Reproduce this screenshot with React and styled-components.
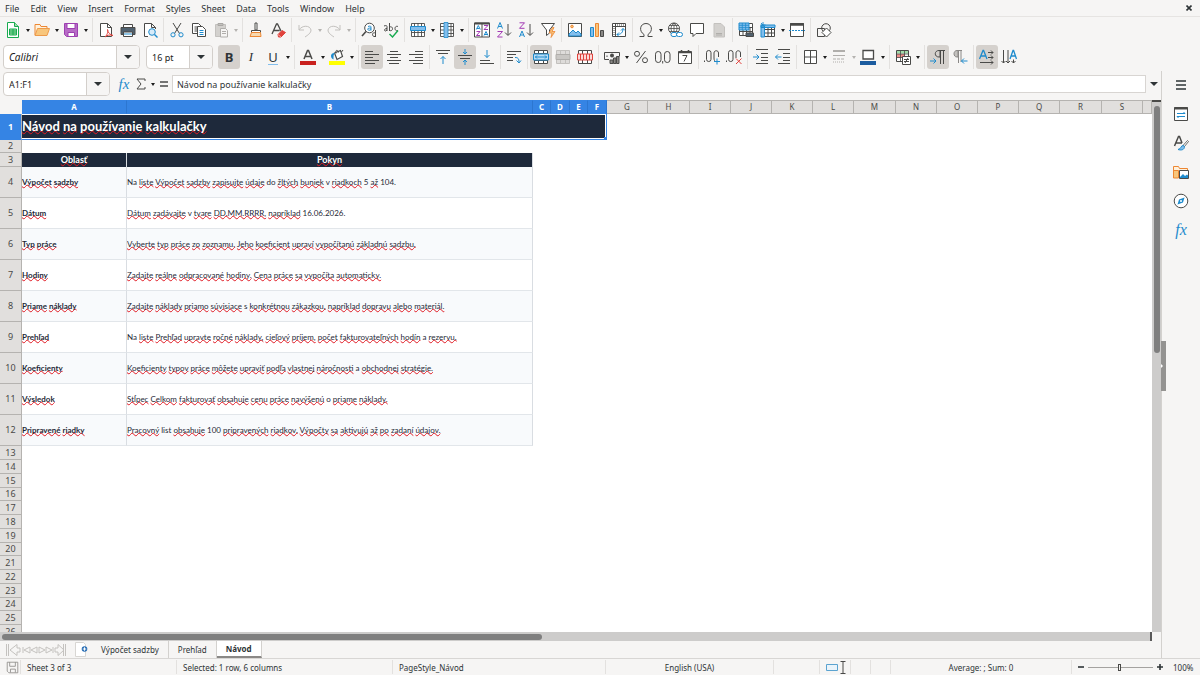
import React from 'react';
import styled, { createGlobalStyle } from 'styled-components';

const menus = ['File', 'Edit', 'View', 'Insert', 'Format', 'Styles', 'Sheet', 'Data', 'Tools', 'Window', 'Help'];

const rows = [
  ['Výpočet sadzby', 'Na liste Výpočet sadzby zapisujte údaje do žltých buniek v riadkoch 5 až 104.'],
  ['Dátum', 'Dátum zadávajte v tvare DD.MM.RRRR, napríklad 16.06.2026.'],
  ['Typ práce', 'Vyberte typ práce zo zoznamu. Jeho koeficient upraví vypočítanú základnú sadzbu.'],
  ['Hodiny', 'Zadajte reálne odpracované hodiny. Cena práce sa vypočíta automaticky.'],
  ['Priame náklady', 'Zadajte náklady priamo súvisiace s konkrétnou zákazkou, napríklad dopravu alebo materiál.'],
  ['Prehľad', 'Na liste Prehľad upravte ročné náklady, cieľový príjem, počet fakturovateľných hodín a rezervu.'],
  ['Koeficienty', 'Koeficienty typov práce môžete upraviť podľa vlastnej náročnosti a obchodnej stratégie.'],
  ['Výsledok', 'Stĺpec Celkom fakturovať obsahuje cenu práce navýšenú o priame náklady.'],
  ['Pripravené riadky', 'Pracovný list obsahuje 100 pripravených riadkov. Výpočty sa aktivujú až po zadaní údajov.'],
];

const emptyRows = Array.from({ length: 14 }, (_, i) => i + 13);
const farColumns = 'GHIJKLMNOPQRS'.split('');
const knownWord = /^(Na|do|v|s|a|o|list|\d.*)$/;

// drawings are 16x16, strokes take the colours below
const ink = '#4a4a48';
const blue = '#1e8bcd';
const sky = '#83beec';
const orange = '#ed8733';
const pale = '#c3c1be';

const lines = (list, color = ink) =>
  list.map(([x1, x2, y]) => <path key={y} d={`M${x1} ${y}H${x2}`} stroke={color} />);

const icons = {
  newDoc: (
    <>
      <path d="M2.500 .5h7l4 4v11h-11z" fill="#fff" stroke="#18ab50" />
      <path d="M9.500 .5v4h4" fill="#a1ddaa" stroke="#18ab50" />
      <path d="M4.500 7h7v6h-7zM4.500 9h7M4.500 11h7M8 7v6" fill="#a1ddaa" stroke="#18ab50" />
    </>
  ),
  open: (
    <>
      <path d="M1 13V2.500h5l1 2h6V7" fill="#fff1dc" stroke={orange} />
      <path d="M1 13.500L3.500 6.500h12L13 13.500z" fill="#f8c67c" stroke="#ed9a4a" />
    </>
  ),
  save: (
    <>
      <path d="M1.500 1.500h13v13h-11l-2-2z" fill="#b76bc6" stroke="#9d3fb0" />
      <path d="M4 1.500h8v5H4z" fill="#fff" stroke="#9d3fb0" />
      <path d="M5 10.500h6.500v4H5z" fill="#fff" stroke="#9d3fb0" />
    </>
  ),
  saved: <path d="M1.500 1.500h13v13h-11l-2-2zM4.500 1.500v5h7v-5M5.500 14v-4h6v4" stroke="#8b8986" />,
  pdf: (
    <>
      <path d="M2.500 1.500h7l4 4v9h-11z" fill="#fff" stroke={ink} />
      <path d="M9.500 1.500v4h4" stroke={ink} />
      <path d="M7 15c3-3 3-6 2.500-7.500 0 3 3 5.500 5.500 6-3-1-6-.5-8 1.500z" stroke="#e0433d" />
    </>
  ),
  print: (
    <>
      <path d="M3.500 5V2.500h9V5" fill="#fff" stroke={ink} />
      <path d="M1 5.500h14v7H1z" fill="#50616f" stroke={ink} />
      <path d="M3.500 10h9v4.500h-9z" fill="#fff" stroke={ink} />
      <path d="M4 12h8" stroke={blue} />
    </>
  ),
  preview: (
    <>
      <path d="M6 14.500H2.500v-13h7l4 4V7M9.500 1.500v4h4" fill="#fff" stroke={ink} />
      <circle cx="10" cy="10" r="3.300" fill="#d7ebf9" stroke={blue} />
      <path d="M12.500 12.500l3 3" stroke={blue} strokeWidth="1.400" />
    </>
  ),
  cut: (
    <>
      <path d="M4 1l6.500 10.500M12 1L5.500 11.500" stroke={ink} />
      <circle cx="4" cy="12.800" r="2.100" stroke={blue} />
      <circle cx="12" cy="12.800" r="2.100" stroke={blue} />
    </>
  ),
  copy: (
    <>
      <path d="M1.500 1.500h6l3 3v7h-9zM3.500 5h4M3.500 7h4M3.500 9h4" fill="#fff" stroke={ink} />
      <path d="M6.500 4.500h5l3 3v7h-8z" fill="#fff" stroke={ink} />
      <path d="M8.500 8.500h4M8.500 10.500h4M8.500 12.500h4" stroke={blue} />
    </>
  ),
  paste: (
    <>
      <path d="M2.500 2.500h10v12h-10z" fill="#d3d1ce" stroke={pale} />
      <path d="M5 1.500h5v2H5z" stroke="#aaa8a5" />
      <path d="M7.500 6.500h5l2 2v6.500h-7zM9 9.500h4M9 11.500h4" fill="#f6f5f4" stroke="#b0aeab" />
    </>
  ),
  brush: (
    <>
      <path d="M7 1h2v7H7z" fill="#fff" stroke={ink} />
      <path d="M3.500 8.500h9v2h-9z" fill="#fff" stroke={ink} />
      <path d="M3.500 10.500h9l.5 4H2z" fill="#f8d9b0" stroke={orange} />
    </>
  ),
  clear: (
    <>
      <path d="M2 12L6.500 2h1L11 9M3.700 8.500h6" stroke={ink} strokeWidth="1.300" />
      <path d="M8 12.500l4-4 3.500 2-4.500 4.500H8.500z" fill="#e0433d" stroke="#e0433d" />
      <path d="M8 12.500l3 2.500" stroke="#f5a29e" />
    </>
  ),
  undo: <path d="M2 3v5h5M2 8c3-5 11-5 12 0 0 3-3 5-6 7" stroke={pale} />,
  redo: <path d="M14 3v5H9M14 8C11 3 3 3 2 8c0 3 3 5 6 7" stroke={pale} />,
  find: (
    <>
      <circle cx="8.500" cy="6" r="4.800" fill="#fff" stroke={ink} />
      <path d="M5 9.500L1 14" stroke={ink} strokeWidth="1.600" />
      <path d="M7 4.500c3-1 3 0 3 1v3M10 6c-3 0-3.500.5-3.200 1.500.4 1 2 1 3.200 0" stroke={blue} />
      <path d="M14.500 8v7M14.500 11c-4-1.500-4 4.500 0 3.500" stroke={ink} />
    </>
  ),
  spell: (
    <>
      <path d="M1 4c3-1 3 0 3 1v4M4 6.500C1 6.500 1 9 2.500 9L4 8M6.500 1v8M6.500 5c4-1.500 4 5 0 3.500M15 4.500c-4-1.500-4 5.500 0 4" stroke={ink} />
      <path d="M6.500 12l3 3L15 8.500" stroke="#18ab50" strokeWidth="1.400" />
    </>
  ),
  rowIns: (
    <>
      <path d="M1.500 1.500h13v13h-13zM1.500 10.500h13M4.500 1v14M8 1v14M11.500 1v14" fill="#fff" stroke={ink} strokeWidth=".9" />
      <path d="M.5 4.500h15v4H.5z" fill={sky} stroke={blue} />
    </>
  ),
  colIns: (
    <>
      <path d="M1.500 1.500h13v13h-13zM1 4.500h14M1 8h14M1 11.500h14M12 1v14" fill="#fff" stroke={ink} strokeWidth=".9" />
      <path d="M5 .5h4v15H5z" fill={sky} stroke={blue} strokeWidth=".8" />
    </>
  ),
  sort: (
    <>
      <path d="M.5 1h15v14H.5zM8 1v14" fill="#fff" stroke={ink} />
      <path d="M.5 1.500h15" stroke={ink} strokeWidth="2" />
      <path d="M2.300 7.500l2-4 2 4M3 6.500h2.500M10 13.500l2-4 2 4M10.700 12.500h2.500" stroke={blue} />
      <path d="M2.500 9.500H6l-3.500 4H6M10 3.500h4l-4 4h4" stroke="#a33ab5" />
    </>
  ),
  sortAsc: (
    <>
      <path d="M1.500 6.500l2.500-6 2.500 6M2.300 4.500h3.400" stroke={blue} />
      <path d="M1.500 9.500h5l-5 5.500h5" stroke="#a33ab5" />
      <path d="M12 2v11M9 10.500l3 3 3-3" stroke={ink} />
    </>
  ),
  sortDesc: (
    <>
      <path d="M1.500 .8h5l-5 5.500h5" stroke="#a33ab5" />
      <path d="M1.500 15L4 9l2.500 6M2.300 13h3.400" stroke={blue} />
      <path d="M12 2v11M9 10.500l3 3 3-3" stroke={ink} />
    </>
  ),
  filter: (
    <>
      <path d="M1.500 1.500h13L9.500 8v3l-3 2.500V8z" fill="#fff" stroke={ink} />
      <path d="M12.500 5.500L9 11h3l-1 4.500 4-6h-3l2-4z" fill="#f8c67c" stroke={orange} strokeWidth=".8" />
    </>
  ),
  image: (
    <>
      <path d="M1.500 1.500h13v13h-13z" fill="#fff" stroke={ink} />
      <path d="M2 12l4-4 3 3 2-2 3 3v2H2z" fill={sky} stroke={blue} />
      <circle cx="5" cy="4.500" r="1.300" fill="#f8c67c" stroke={orange} />
    </>
  ),
  chart: (
    <>
      <path d="M1.500 5.500h3v9h-3z" fill={sky} stroke={blue} />
      <path d="M6.500 1.500h3v13h-3z" fill="#f8c67c" stroke={orange} />
      <path d="M11.500 8.500h3v6h-3z" fill="#8a8886" stroke={ink} />
    </>
  ),
  pivot: (
    <>
      <path d="M1.500 1.500h13v13h-13zM1.500 4.500h13M4.500 1.500v13" fill="#fff" stroke={ink} />
      <path d="M6 12.500c4 0 6-2 6-6M8 10.500l-2 2 2 2M10 8.500l2-2 2 2" stroke={blue} />
      <path d="M3 6v8M6 3h8" stroke={ink} strokeDasharray="1 1" />
    </>
  ),
  omega: <path d="M1.500 14.500H6v-2C.5 9 2 1.500 8 1.500S15.500 9 10 12.500v2h4.500" stroke={ink} />,
  link: (
    <>
      <circle cx="7" cy="6.500" r="5.500" fill="#fff" stroke={ink} />
      <path d="M1.500 6.500h11M7 1v11M2.500 3.500h9M2.500 9.500h9M7 1C3 4 3 9 7 12M7 1c4 3 4 8 0 11" stroke={ink} strokeWidth=".8" />
      <rect x="4" y="10.500" width="6" height="4" rx="2" fill="#fff" stroke={blue} />
      <rect x="9.500" y="10.500" width="6" height="4" rx="2" fill="#fff" stroke={blue} />
    </>
  ),
  comment: <path d="M1.500 1.500h13v10H7l-3 3v-3H1.500z" fill="#fff" stroke={ink} />,
  header: (
    <>
      <path d="M3 1.500h7l3.500 3.500v10H3z" fill="#d3d1ce" stroke={pale} />
      <path d="M5 11.500h6M5 13h6" stroke="#b0aeab" />
    </>
  ),
  printArea: (
    <>
      <path d="M1.500 1.500h13v12h-13zM1.500 5.500h13M1.500 9.500h13M5 5v8M8.500 5v8M12 5v8" fill="#fff" stroke={ink} />
      <path d="M1 1h10v7H1z" fill={sky} stroke={blue} />
      <path d="M1 3.300h10M1 5.600h10M4.300 1v7M7.600 1v7" stroke={blue} strokeWidth=".8" />
      <path d="M8 11h7.500v3.500H8z" fill="#50616f" stroke={ink} />
    </>
  ),
  freeze: (
    <>
      <path d="M1.500 3.500h13v11h-13zM1.500 7.500h13M1.500 11h13M8 4v10M11.500 4v10" fill="#fff" stroke={ink} />
      <path d="M1 4h3.500v11H1zM1 3h14v2.500H1z" fill={sky} stroke={blue} />
      <path d="M3 0v6M.5 3h5M1 1l4 4" stroke={blue} strokeWidth=".9" />
    </>
  ),
  splitWin: (
    <>
      <path d="M1.500 1.500h13v13h-13z" fill="#fff" stroke={ink} />
      <path d="M1 2.500h14" stroke={ink} strokeWidth="2.500" />
      <path d="M0 8.500h16" stroke={blue} strokeDasharray="2 1" />
    </>
  ),
  shapes: (
    <>
      <path d="M1.500 6.500h7v8h-7z" stroke={ink} />
      <circle cx="10" cy="6" r="4.300" stroke={ink} />
      <path d="M10.500 6L15 10.500 10.500 15 6 10.500z" fill="#fff" stroke={ink} />
    </>
  ),
  fontColor: (
    <>
      <path d="M4 10L7.500 1.500h1L12 10M5.200 7.500h5.600" stroke={ink} strokeWidth="1.500" />
      <path d="M0 12h16v4H0z" fill="#c9211e" />
    </>
  ),
  highlight: (
    <>
      <path d="M0 12h16v4H0z" fill="#ffff00" />
      <path d="M5.500 4l6-2.500 2 6-5.500 3z" fill="#fff" stroke={ink} strokeWidth="1.200" />
      <path d="M7 4.500c-1-4 2-4 2.500-1M12.500 3l1.500-2" stroke={ink} />
      <path d="M4.500 10.500C1 9 1 3.500 6 4c-1.500 1-1.500 3-1.500 6.500z" fill={blue} />
    </>
  ),
  left: lines([[1, 9, 2.5], [1, 15, 5.5], [1, 9, 8.5], [1, 15, 11.5], [1, 11, 14.5]]),
  center: lines([[4, 12, 2.5], [1, 15, 5.5], [4, 12, 8.5], [1, 15, 11.5], [3, 13, 14.5]]),
  right: lines([[7, 15, 2.5], [1, 15, 5.5], [7, 15, 8.5], [1, 15, 11.5], [5, 15, 14.5]]),
  top: (
    <>
      {lines([[1, 15, 1.5], [3, 13, 4.5]])}
      <path d="M8 15V7.500M5.500 10L8 7.500l2.500 2.500" stroke={blue} />
    </>
  ),
  middle: (
    <>
      {lines([[1, 15, 6.5], [3, 13, 9.5]])}
      <path d="M8 0v5M6 3l2 2 2-2M8 16v-5M6 13l2-2 2 2" stroke={blue} />
    </>
  ),
  bottom: (
    <>
      {lines([[1, 11, 11.5], [1, 15, 14.5]])}
      <path d="M8 1v7.500M5.500 6L8 8.500 10.500 6" stroke={blue} />
    </>
  ),
  wrap: (
    <>
      {lines([[1, 15, 2.5], [1, 10, 5.5], [1, 7, 8.5], [1, 7, 11.5]])}
      <path d="M9 8.500c3 0 4 1 4 5M10.500 11.500l2.500 2.500 2-2.500" stroke={blue} />
    </>
  ),
  merge: (
    <>
      <path d="M1.500 1.500h13v13h-13zM5.500 1v14M10.500 1v14M1.500 4.500h13M1.500 11.500h13" fill="#fff" stroke={ink} />
      <path d="M.5 5h15v6H.5z" fill="#b9dcf5" stroke={blue} />
      <path d="M2 8h12M4 6.500L2.500 8 4 9.500M12 6.500L13.500 8 12 9.500" stroke={blue} />
    </>
  ),
  mergeOff: (
    <>
      <path d="M1.500 1.500h13v13h-13zM5.500 1v14M10.500 1v14" fill="#dedcda" stroke={pale} />
      <path d="M1 5.500h14v5H1z" fill="#c9c7c4" stroke="#b0aeab" />
    </>
  ),
  unmerge: (
    <>
      <path d="M1.500 1.500h13v13h-13zM5.500 1v14M10.500 1v14" fill="#fff" stroke={ink} />
      <path d="M.5 5h15v6H.5zM3.500 5v6M6.500 5v6M9.500 5v6M12.500 5v6" fill="#fbdad9" stroke="#e0433d" />
    </>
  ),
  currency: (
    <>
      <path d="M5 10.500H.5v-7h15v4M3 6.500v1.500" stroke={ink} />
      <circle cx="8" cy="6.500" r="2" fill={ink} />
      <path d="M6 11h3v3.500H6zM9.500 9H12v5.500H9.500zM12.500 7.500h2.500v7h-2.500z" fill="#8a8886" stroke={ink} />
    </>
  ),
  percent: (
    <>
      <circle cx="4" cy="4.800" r="2.500" stroke={ink} />
      <circle cx="12" cy="11.200" r="2.500" stroke={ink} />
      <path d="M12.500 2l-9 12" stroke={ink} />
    </>
  ),
  number: (
    <>
      <rect x=".5" y="2.500" width="5.500" height="11" rx="2.700" stroke={ink} />
      <rect x="9.500" y="2.500" width="5.500" height="11" rx="2.700" stroke={ink} />
      <path d="M7.700 12v2.500" stroke={ink} />
    </>
  ),
  date: (
    <>
      <path d="M1.500 2.500h13v12h-13z" fill="#fff" stroke={ink} />
      <path d="M1.500 3.500h13M4.500 1v2M11.500 1v2" stroke={ink} strokeWidth="1.600" />
      <path d="M5.500 6.500h4.500l-3 6" stroke={ink} />
    </>
  ),
  addDec: (
    <>
      <rect x="2.500" y="1.500" width="4.500" height="11" rx="2.200" stroke={ink} />
      <path d="M.5 11.500v1.500M14.500 8V4c0-3-4.500-3-4.500 0v5c0 2 .5 2.500 1 3" stroke={ink} />
      <path d="M13 9.500v6M10 12.500h6" stroke={blue} />
    </>
  ),
  delDec: (
    <>
      <rect x="2.500" y="1.500" width="4.500" height="11" rx="2.200" stroke={ink} />
      <path d="M.5 11.500v1.500M14.500 8V4c0-3-4.500-3-4.500 0v5" stroke={ink} />
      <path d="M10 9.500l5.500 5.500M15.500 9.500L10 15" stroke="#e0433d" />
    </>
  ),
  indent: (
    <>
      {lines([[3, 15, 0.5], [8, 15, 4.5], [8, 15, 8.5], [8, 15, 11.5], [3, 15, 14.5]])}
      <path d="M0 8h6M3.500 5.500L6 8l-2.500 2.500" stroke={blue} />
    </>
  ),
  outdent: (
    <>
      {lines([[3, 15, 0.5], [8, 15, 4.5], [8, 15, 8.5], [8, 15, 11.5], [3, 15, 14.5]])}
      <path d="M6.500 8h-6M3 5.500L.5 8 3 10.500" stroke={blue} />
    </>
  ),
  borders: (
    <>
      <path d="M2.500 1.500h12v13h-12z" fill="#fff" stroke={ink} />
      <path d="M8.500 2v12M3 8h11" stroke={ink} />
    </>
  ),
  borderStyle: (
    <>
      <path d="M2 2h12" stroke="#b0aeab" strokeWidth="2" />
      <path d="M2 6.500h12" stroke="#b0aeab" />
      <path d="M2 10h12" stroke="#b0aeab" strokeDasharray="3 1" />
      <path d="M2 13h12" stroke="#b0aeab" strokeDasharray="1 1" />
    </>
  ),
  lineColor: (
    <>
      <path d="M3 1.500h10.500v8.500H3z" fill="#fff" stroke={ink} strokeWidth="1.300" />
      <path d="M0 12h16v4H0z" fill="#1c5c9f" />
    </>
  ),
  cond: (
    <>
      <path d="M1.500 1.500h12v11h-12z" fill="#fff" stroke={ink} />
      <path d="M2 2h11v2.500H2z" fill="#a1ddaa" />
      <path d="M2 5h8v3.500H2z" fill="#ef8d89" />
      <path d="M1.500 5h12M1.500 8.500h12M5.500 1v11M9.500 1v11" stroke={ink} strokeWidth=".8" />
      <path d="M7.500 7.500h8v8h-8z" fill="#fff" stroke={ink} />
      <path d="M9 10.500h5M9 12.500h5M13 9l-3 5" stroke={ink} />
    </>
  ),
  ltr: (
    <>
      <path d="M13.500 15V1.500H9C4 1.500 4 8 9 8h1V1.500M10.500 1.500V15M9 1.500h6" stroke={ink} />
      <path d="M0 12h6M3.500 9.500L6 12l-2.500 2.500" stroke={blue} />
    </>
  ),
  rtl: (
    <>
      <path d="M6.500 1.500H5C1 1.500 1 8 5 8h1.500z" fill={pale} />
      <path d="M9 13V1.500H5C1 1.500 1 8 5 8h1V1.500M6.500 1.500V14M5 1.500h5" stroke="#8a8886" />
      <path d="M15.500 12h-6M12 9.500L9.500 12l2.500 2.500" stroke={blue} />
    </>
  ),
  horText: (
    <>
      <path d="M.5 10L4 1.500h.6L8 10M1.800 7h5" stroke={blue} strokeWidth="1.300" />
      <path d="M9 3.500h5M12 1.500l2 2-2 2M9 8.500h5M12 6.500l2 2-2 2M1 13.500h13M12 11.500l2 2-2 2" stroke={ink} />
    </>
  ),
  verText: (
    <>
      <path d="M9 10l3-8.500h.6L15.500 10M10 7h4.500" stroke={blue} strokeWidth="1.300" />
      <path d="M2.500 1v13M.5 12l2 2 2-2M7 1v13M5 12l2 2 2-2M12.500 10.500v3.500M10.500 12l2 2 2-2" stroke={ink} />
    </>
  ),
  menu: <path d="M3 4h10M3 8h10M3 12h10" stroke="#2e3436" strokeWidth="1.600" />,
  properties: (
    <>
      <path d="M1.500 1.500h13v13h-13z" fill="#fff" stroke={ink} />
      <path d="M1 2.500h14" stroke={ink} strokeWidth="2" />
      <path d="M4 7.500h8M10.500 6l1.500 1.500M12 10.500H4M4 10.500l1.500 1.500" stroke={blue} />
    </>
  ),
  styles: (
    <>
      <path d="M1.500 11L5.500 1.500h1L9 8M3 8h6" stroke={ink} strokeWidth="1.500" />
      <path d="M14.500 5.500L10 10.500l1.500 1 4-5z" fill="#fff" stroke={ink} strokeWidth=".8" />
      <path d="M10 10.500c-2 0-2 3.500-5 4 3 1 6.500.5 6.500-3z" fill={sky} stroke={blue} />
    </>
  ),
  gallery: (
    <>
      <path d="M.5 14V2.500h5l1 2h8V7" fill="#fff1dc" stroke={orange} />
      <path d="M.5 14V6.500h5V14z" fill="#f8c67c" stroke={orange} />
      <path d="M6.500 6.500h9v8h-9z" fill="#fff" stroke={ink} />
      <path d="M7 13l3-3 2 2 2-1.500 1 1V14H7z" fill={blue} />
    </>
  ),
  navigator: (
    <>
      <circle cx="8" cy="8" r="6.800" fill="#fff" stroke={ink} />
      <path d="M11.500 4.500l-1.500 5-5.500 2 1.500-5z" fill={blue} />
      <circle cx="8" cy="8" r="1" fill="#fff" />
    </>
  ),
};

function Icon({ name, size = 16 }) {
  return (
    <Drawing width={size} height={size} viewBox="0 0 16 16" fill="none" aria-hidden="true">
      {icons[name]}
    </Drawing>
  );
}

function Tool({ name, label, active, arrow, dim, children }) {
  const button = (
    <ToolButton type="button" aria-label={label} $active={active}>
      {children || <Icon name={name} />}
    </ToolButton>
  );
  if (!arrow) return button;
  return (
    <Split>
      {button}
      <ArrowButton type="button" aria-label={`${label} options`} $dim={dim} />
    </Split>
  );
}

function Spelled({ text }) {
  return text.split(' ').map((word, i) => (
    <React.Fragment key={i}>
      {i > 0 && ' '}
      {knownWord.test(word) ? word : <Misspelled>{word}</Misspelled>}
    </React.Fragment>
  ));
}

function Toolbars() {
  return (
    <>
      <Toolbar $height={26} aria-label="Standard">
        <Group>
          <Tool name="newDoc" label="New" arrow />
          <Tool name="open" label="Open" arrow />
          <Tool name="save" label="Save" arrow />
        </Group>
        <Group>
          <Tool name="pdf" label="Export as PDF" />
          <Tool name="print" label="Print" />
          <Tool name="preview" label="Print Preview" />
        </Group>
        <Group>
          <Tool name="cut" label="Cut" />
          <Tool name="copy" label="Copy" />
          <Tool name="paste" label="Paste" arrow dim />
        </Group>
        <Group>
          <Tool name="brush" label="Clone Formatting" />
          <Tool name="clear" label="Clear Formatting" />
        </Group>
        <Group>
          <Tool name="undo" label="Undo" arrow dim />
          <Tool name="redo" label="Redo" arrow dim />
        </Group>
        <Group>
          <Tool name="find" label="Find and Replace" />
          <Tool name="spell" label="Spelling" />
        </Group>
        <Group>
          <Tool name="rowIns" label="Row" arrow />
          <Tool name="colIns" label="Column" arrow />
        </Group>
        <Group>
          <Tool name="sort" label="Sort" />
          <Tool name="sortAsc" label="Sort Ascending" />
          <Tool name="sortDesc" label="Sort Descending" />
          <Tool name="filter" label="AutoFilter" />
        </Group>
        <Group>
          <Tool name="image" label="Insert Image" />
          <Tool name="chart" label="Insert Chart" />
          <Tool name="pivot" label="Pivot Table" />
        </Group>
        <Group>
          <Tool name="omega" label="Special Character" arrow />
          <Tool name="link" label="Hyperlink" />
          <Tool name="comment" label="Comment" />
          <Tool name="header" label="Headers and Footers" />
        </Group>
        <Group>
          <Tool name="printArea" label="Print Area" />
          <Tool name="freeze" label="Freeze" arrow />
          <Tool name="splitWin" label="Split Window" />
        </Group>
        <Group>
          <Tool name="shapes" label="Draw Functions" />
        </Group>
      </Toolbar>

      <Toolbar $height={28} aria-label="Formatting">
        <Combo $width={137}>
          <ComboInput aria-label="Font name" defaultValue="Calibri" $italic />
          <ComboArrow type="button" aria-label="Font list" />
        </Combo>
        <Combo $width={67}>
          <ComboInput aria-label="Font size" defaultValue="16 pt" />
          <ComboArrow type="button" aria-label="Size list" />
        </Combo>
        <Group>
          <Tool label="Bold" active><Letter $bold>B</Letter></Tool>
          <Tool label="Italic"><Letter $italic>I</Letter></Tool>
          <Tool label="Underline" arrow><Letter $underline>U</Letter></Tool>
        </Group>
        <Group>
          <Tool name="fontColor" label="Font Color" arrow />
          <Tool name="highlight" label="Background Color" arrow />
        </Group>
        <Group>
          <Tool name="left" label="Align Left" active />
          <Tool name="center" label="Center Horizontally" />
          <Tool name="right" label="Align Right" />
        </Group>
        <Group>
          <Tool name="top" label="Align Top" />
          <Tool name="middle" label="Center Vertically" active />
          <Tool name="bottom" label="Align Bottom" />
        </Group>
        <Group>
          <Tool name="wrap" label="Wrap Text" />
        </Group>
        <Group>
          <Tool name="merge" label="Merge and Center" active />
          <Tool name="mergeOff" label="Merge Cells" />
          <Tool name="unmerge" label="Unmerge Cells" />
        </Group>
        <Group>
          <Tool name="currency" label="Currency" arrow />
          <Tool name="percent" label="Percent" />
          <Tool name="number" label="Number" />
          <Tool name="date" label="Date" />
        </Group>
        <Group>
          <Tool name="addDec" label="Add Decimal Place" />
          <Tool name="delDec" label="Delete Decimal Place" />
        </Group>
        <Group>
          <Tool name="indent" label="Increase Indent" />
          <Tool name="outdent" label="Decrease Indent" />
        </Group>
        <Group>
          <Tool name="borders" label="Borders" arrow />
          <Tool name="borderStyle" label="Border Style" arrow dim />
          <Tool name="lineColor" label="Border Color" arrow />
        </Group>
        <Group>
          <Tool name="cond" label="Conditional" arrow />
        </Group>
        <Group>
          <Tool name="ltr" label="Left-To-Right" active />
          <Tool name="rtl" label="Right-To-Left" />
        </Group>
        <Group>
          <Tool name="horText" label="Text direction from left to right" active />
          <Tool name="verText" label="Text direction from top to bottom" />
        </Group>
      </Toolbar>
    </>
  );
}

function Sheet() {
  return (
    <SheetArea>
      <Cells>
        <Grid>
          <colgroup>
            <Col $width={22} />
            <Col $width={105} />
            <Col $width={406} />
            <Col $width={18} />
            <Col $width={19} />
            <Col $width={18} />
            <Col $width={19} />
            {farColumns.map((name, i) => <Col key={name} $width={i % 5 === 1 ? 42 : 41} />)}
            <col />
          </colgroup>
          <thead>
            <tr>
              <Corner />
              {'ABCDEF'.split('').map((name) => <ColHead key={name} scope="col" $selected>{name}</ColHead>)}
              {farColumns.map((name) => <ColHead key={name} scope="col">{name}</ColHead>)}
              <ColHead />
            </tr>
          </thead>
          <tbody>
            <Row $height={26}>
              <RowHead scope="row" $selected>1</RowHead>
              <TitleCell colSpan={6}><Spelled text="Návod na používanie kalkulačky" /></TitleCell>
            </Row>
            <Row $height={13}>
              <RowHead scope="row">2</RowHead>
            </Row>
            <Row $height={14}>
              <RowHead scope="row">3</RowHead>
              <HeadCell><Spelled text="Oblasť" /></HeadCell>
              <HeadCell><Spelled text="Pokyn" /></HeadCell>
            </Row>
            {rows.map(([area, hint], i) => (
              <Row key={area} $height={31}>
                <RowHead scope="row">{i + 4}</RowHead>
                <Cell $tint={i % 2 === 0} $bold><Spelled text={area} /></Cell>
                <Cell $tint={i % 2 === 0}><Spelled text={hint} /></Cell>
              </Row>
            ))}
            {emptyRows.map((n) => (
              <Row key={n} $height={n % 4 === 0 ? 13 : 14}>
                <RowHead scope="row">{n}</RowHead>
              </Row>
            ))}
          </tbody>
        </Grid>
      </Cells>
      <VScroll><VThumb /></VScroll>
      <HScroll><HThumb /></HScroll>
    </SheetArea>
  );
}

export default function App() {
  return (
    <Window>
      <GlobalStyle />
      <MenuBar>
        {menus.map((name) => <MenuItem key={name} type="button">{name}</MenuItem>)}
        <CloseButton type="button" aria-label="Close document">
          <svg width="6" height="6" viewBox="0 0 6 6"><path d="M.5 .5l5 5M5.500 .5l-5 5" stroke="#2e3436" strokeWidth="1.600" /></svg>
        </CloseButton>
      </MenuBar>
      <Toolbars />

      <Body>
        <Main>
          <FormulaBar>
            <Combo $width={107}>
              <ComboInput aria-label="Name box" defaultValue="A1:F1" />
              <ComboArrow type="button" aria-label="Named ranges" />
            </Combo>
            <FxButton type="button" aria-label="Function Wizard">fx</FxButton>
            <FormulaButton type="button" aria-label="Select Function">
              <svg width="10" height="12" viewBox="0 0 10 12" fill="none"><path d="M9 3V1H1l4 5-4 5h8V9" stroke={ink} /></svg>
            </FormulaButton>
            <ArrowButton type="button" aria-label="Function list" />
            <FormulaButton type="button" aria-label="Formula">
              <svg width="8" height="8" viewBox="0 0 8 8"><path d="M0 2h8M0 6h8" stroke={ink} strokeWidth="1.400" /></svg>
            </FormulaButton>
            <FormulaInput aria-label="Formula input" defaultValue="Návod na používanie kalkulačky" />
            <ExpandButton type="button" aria-label="Expand formula bar" />
          </FormulaBar>
          <Sheet />
          <TabBar>
            <svg width="62" height="14" viewBox="0 0 62 14" fill="none" stroke="#c4c2bf" aria-hidden="true">
              <path d="M1.500 1v12M3.500 1v12M12 1.500L5 7l7 5.500V9h3V5h-3zM18 4v6M25 4l-6 3 6 3zM32 4l-6 3 6 3zM34 4v6l6-3zM41 4v6l6-3zM48 4v6M50 5v4h3v3.500L59 7l-6-5.500V5zM58.500 1v12M60.500 1v12" />
            </svg>
            <AddSheet type="button" aria-label="Add sheet">
              <svg width="14" height="15" viewBox="0 0 14 15" fill="none">
                <path d="M1.500 .5h8l2 2v12h-10z" fill="#fff" stroke="#d8d6d3" />
                <circle cx="10.500" cy="7" r="2.800" fill="#2a6fb5" />
                <path d="M10.500 5.300v3.400M8.800 7h3.400" stroke="#fff" />
              </svg>
            </AddSheet>
            <Tab type="button">Výpočet sadzby</Tab>
            <Tab type="button">Prehľad</Tab>
            <Tab type="button" $active>Návod</Tab>
          </TabBar>
        </Main>
        <Sidebar>
          <SidebarHandle type="button" aria-label="Hide sidebar" />
          {['menu', 'properties', 'styles', 'gallery', 'navigator'].map((name) => (
            <SideButton key={name} type="button" aria-label={name}><Icon name={name} /></SideButton>
          ))}
          <SideButton type="button" aria-label="functions"><Fx>fx</Fx></SideButton>
        </Sidebar>
      </Body>

      <StatusBar>
        <Status $width={21} $fixed><Icon name="saved" size={13} /></Status>
        <Status $width={156}>Sheet 3 of 3</Status>
        <Status $width={216}>Selected: 1 row, 6 columns</Status>
        <Status $width={213}>PageStyle_Návod</Status>
        <Status $width={168} $center>English (USA)</Status>
        <Status $width={46} />
        <Status $width={31} $fixed>
          <svg width="21" height="13" viewBox="0 0 21 13" fill="none">
            <path d="M.5 3.500h11v6H.5z" fill="#eaf4fb" stroke="#5ba3d0" />
            <path d="M14.500 .5h5M14.500 12.500h5M17 .5v12" stroke={ink} />
          </svg>
        </Status>
        <Status $width={20} $fixed />
        <Status $width={20} $fixed />
        <Status $width={181} $center>Average: ; Sum: 0</Status>
        <ZoomBox>
          <ZoomButton type="button" aria-label="Zoom out">
            <svg width="8" height="8" viewBox="0 0 8 8"><path d="M1 4h6" stroke="#2e3436" strokeWidth="1.600" /></svg>
          </ZoomButton>
          <Slider type="range" min="0" max="100" defaultValue="48" aria-label="Zoom" />
          <ZoomButton type="button" aria-label="Zoom in">
            <svg width="8" height="8" viewBox="0 0 8 8"><path d="M1 4h6M4 1v6" stroke="#2e3436" strokeWidth="1.600" /></svg>
          </ZoomButton>
        </ZoomBox>
        <Percent>100%</Percent>
      </StatusBar>
    </Window>
  );
}

const GlobalStyle = createGlobalStyle`
  * {
    box-sizing: border-box;
  }

  body {
    margin: 0;
    background: #f6f5f4;
    color: #2e3436;
    font-family: "Noto Sans", sans-serif;
    font-size: 9px;
  }

  button, input {
    margin: 0;
    padding: 0;
    border: 0;
    background: none;
    color: inherit;
    font: inherit;
  }
`;

const Window = styled.div`
  display: flex;
  flex-direction: column;
  height: 100vh;
  overflow: hidden;
`;

const MenuBar = styled.nav`
  display: flex;
  align-items: center;
  height: 17px;
  padding-right: 8px;
  border-bottom: 1px solid #e6e4e2;
`;

const MenuItem = styled.button`
  padding: 0 6px 0 5px;
`;

const CloseButton = styled.button`
  display: flex;
  margin-left: auto;
`;

const Toolbar = styled.div`
  display: flex;
  align-items: center;
  height: ${({ $height }) => $height}px;
  padding-left: 2px;
`;

const Split = styled.div`
  display: flex;
  align-items: center;
`;

const Group = styled.div`
  display: flex;
  align-items: center;
  padding-right: 2px;
  margin-right: 2px;
  border-right: 1px solid #e3e1df;

  &:last-child {
    border-right: 0;
  }

  & > ${Split}:last-child {
    padding-right: 1px;
  }
`;

const Drawing = styled.svg`
  display: block;
`;

const ToolButton = styled.button`
  display: flex;
  align-items: center;
  justify-content: center;
  width: 22px;
  height: 24px;
  border-radius: 3px;
  background: ${({ $active }) => ($active ? '#d5d1cd' : 'none')};
`;

const ArrowButton = styled.button`
  display: flex;
  align-items: center;
  justify-content: center;
  width: 7px;
  height: 24px;

  &::before {
    content: '';
    border: 2px solid transparent;
    border-top: 3px solid ${({ $dim }) => ($dim ? '#b5b3b0' : '#1c1c1c')};
    border-bottom: 0;
  }
`;

const Letter = styled.span`
  font-family: ${({ $italic }) => ($italic ? '"Liberation Serif", serif' : '"Noto Sans", sans-serif')};
  font-size: 13px;
  line-height: 14px;
  font-weight: ${({ $bold }) => ($bold ? 700 : 400)};
  font-style: ${({ $italic }) => ($italic ? 'italic' : 'normal')};
  border-bottom: ${({ $underline }) => ($underline ? `1px solid ${sky}` : '0')};
`;

const Combo = styled.div`
  display: flex;
  flex: none;
  width: ${({ $width }) => $width}px;
  height: 24px;
  margin: 0 5px 0 1px;
  border: 1px solid #d3cfcb;
  border-radius: 4px;
  background: #fff;
  overflow: hidden;
`;

const ComboInput = styled.input`
  flex: 1;
  min-width: 0;
  padding-left: 5px;
  color: #1c1c1c;
  font-size: ${({ $italic }) => ($italic ? 10 : 9)}px;
  font-style: ${({ $italic }) => ($italic ? 'italic' : 'normal')};
`;

const ComboArrow = styled.button`
  display: flex;
  align-items: center;
  justify-content: center;
  width: 23px;
  border-left: 1px solid #d3cfcb;
  background: #f6f5f4;

  &::before {
    content: '';
    border: 4px solid transparent;
    border-top-color: #2e3436;
    border-bottom: 0;
  }
`;

const Body = styled.div`
  display: flex;
  flex: 1;
  min-height: 0;
`;

const Main = styled.main`
  display: flex;
  flex: 1;
  flex-direction: column;
  min-width: 0;
`;

const FormulaBar = styled.div`
  display: flex;
  align-items: center;
  height: 29px;
  padding: 0 0 3px 2px;
`;

const Fx = styled.span`
  color: ${blue};
  font-family: "Liberation Serif", serif;
  font-size: 16px;
  font-style: italic;
`;

const FormulaButton = styled.button`
  display: flex;
  align-items: center;
  justify-content: center;
  width: 16px;
`;

const FxButton = styled.button`
  width: 18px;
  color: ${blue};
  font: italic 15px "Liberation Serif", serif;
`;

const FormulaInput = styled.input`
  flex: 1;
  min-width: 0;
  height: 18px;
  padding-left: 4px;
  border: 1px solid #d8d5d2;
  background: #fff;
`;

const ExpandButton = styled(ComboArrow)`
  width: 15px;
  border: 0;
`;

const SheetArea = styled.div`
  display: grid;
  flex: 1;
  grid-template-columns: 1fr 9px;
  grid-template-rows: 1fr 9px;
  min-height: 0;
`;

const Cells = styled.div`
  min-width: 0;
  overflow: hidden;
  background: #fff;
`;

const Grid = styled.table`
  width: 100%;
  border-collapse: separate;
  border-spacing: 0;
  table-layout: fixed;

  th, td {
    padding: 0;
    overflow: hidden;
    white-space: nowrap;
  }
`;

const Col = styled.col`
  width: ${({ $width }) => $width}px;
`;

const Corner = styled.td`
  background: #f6f5f4;
`;

const ColHead = styled.th`
  height: 14px;
  border-top: 1px solid ${({ $selected }) => ($selected ? '#3584e4' : '#b5b3b0')};
  border-right: 1px solid ${({ $selected }) => ($selected ? '#2c76d0' : '#b5b3b0')};
  border-bottom: 1px solid ${({ $selected }) => ($selected ? '#3584e4' : '#b5b3b0')};
  background: ${({ $selected }) => ($selected ? '#3584e4' : '#e1dfdd')};
  color: ${({ $selected }) => ($selected ? '#fff' : '#4a4a48')};
  font-size: 8px;
  font-weight: ${({ $selected }) => ($selected ? 700 : 400)};
  line-height: 12px;
`;

const Row = styled.tr`
  height: ${({ $height }) => $height}px;
`;

const RowHead = styled.th`
  border-right: 1px solid #b5b3b0;
  border-bottom: 1px solid ${({ $selected }) => ($selected ? '#3584e4' : '#b5b3b0')};
  background: ${({ $selected }) => ($selected ? '#3584e4' : '#e1dfdd')};
  color: ${({ $selected }) => ($selected ? '#fff' : '#4a4a48')};
  font-size: 9px;
  font-weight: ${({ $selected }) => ($selected ? 700 : 400)};
  line-height: 12px;
`;

const Misspelled = styled.span`
  text-decoration: underline wavy #e01b24 1px;
  text-decoration-skip-ink: none;
  text-underline-offset: -1px;
`;

const Cell = styled.td`
  border-right: 1px solid #d9dde2;
  border-bottom: 1px solid #e2e6ea;
  background: ${({ $tint }) => ($tint ? '#f8fafc' : '#fff')};
  color: #1f2937;
  font-family: Lato, sans-serif;
  font-size: 8px;
  font-weight: ${({ $bold }) => ($bold ? 700 : 400)};
  line-height: 12px;
`;

const HeadCell = styled(Cell)`
  border-bottom: 0;
  background: #1e293b;
  color: #fff;
  font-size: 9px;
  font-weight: 700;
  text-align: center;
`;

const TitleCell = styled(Cell)`
  position: relative;
  border: 0;
  background: #1e293b;
  box-shadow: inset -1px -1px #3584e4, inset -2px -2px #fff, inset 0 1px #fff;
  color: #fff;
  font-size: 13px;
  font-weight: 700;
  line-height: 18px;

  && {
    padding-bottom: 2px;
  }

  &::after {
    content: '';
    position: absolute;
    right: 0;
    bottom: 0;
    width: 3px;
    height: 3px;
    background: #3584e4;
  }
`;

const VScroll = styled.div`
  padding: 4px 1px 0 2px;
  border-top: 2px solid #4a4a48;
  background: #cdcccb;
`;

const VThumb = styled.div`
  width: 6px;
  height: 47%;
  border-radius: 3px;
  background: #7f7f7f;
`;

const HScroll = styled.div`
  padding: 2px 0 0 2px;
  border-right: 2px solid #5a5a5a;
  background: #cdcccb;
`;

const HThumb = styled.div`
  width: 47%;
  height: 6px;
  border-radius: 3px;
  background: #7f7f7f;
`;

const TabBar = styled.div`
  display: flex;
  align-items: center;
  height: 17px;
  padding-left: 5px;
`;

const AddSheet = styled.button`
  display: flex;
  margin: 0 4px 0 7px;
`;

const Tab = styled.button`
  height: 17px;
  padding: 0 9px;
  border-right: 1px solid #d3d1ce;
  border-bottom: ${({ $active }) => ($active ? '2px solid #8a8886' : '0')};
  background: ${({ $active }) => ($active ? '#fff' : 'none')};
  font-size: 8px;
  font-weight: ${({ $active }) => ($active ? 700 : 400)};
`;

const Sidebar = styled.aside`
  position: relative;
  display: flex;
  flex-direction: column;
  align-items: center;
  gap: 5px;
  width: 39px;
  padding-top: 2px;
  border-left: 1px solid #d3d1ce;
`;

const SideButton = styled.button`
  display: flex;
  align-items: center;
  justify-content: center;
  width: 24px;
  height: 24px;
`;

const SidebarHandle = styled.button`
  position: absolute;
  top: 46%;
  left: -1px;
  display: flex;
  align-items: center;
  width: 5px;
  height: 50px;
  background: #949391;

  &::before {
    content: '';
    border: 2px solid transparent;
    border-left-color: #fff;
    border-right: 0;
  }
`;

const StatusBar = styled.footer`
  display: flex;
  align-items: center;
  height: 17px;
  border-top: 1px solid #d8d6d4;
  font-size: 8px;
`;

const Status = styled.div`
  display: flex;
  flex: ${({ $fixed }) => ($fixed ? 'none' : '1 1 auto')};
  align-items: center;
  justify-content: ${({ $center }) => ($center ? 'center' : 'flex-start')};
  width: ${({ $width }) => $width}px;
  height: 14px;
  padding-left: ${({ $center }) => ($center ? 0 : 6)}px;
  border-right: 1px solid #e3e1df;
`;

const ZoomBox = styled.div`
  display: flex;
  flex: none;
  align-items: center;
  gap: 3px;
  width: 96px;
  padding-left: 5px;
`;

const ZoomButton = styled.button`
  display: flex;
`;

const Slider = styled.input`
  width: 65px;
  height: 10px;
  appearance: none;
  background: linear-gradient(#a5a3a0, #a5a3a0) center / 100% 1px no-repeat;

  &::-webkit-slider-thumb {
    appearance: none;
    width: 3px;
    height: 7px;
    border: 1px solid #4a4a48;
    background: #f6f5f4;
  }
`;

const Percent = styled.div`
  flex: none;
  width: 32px;
  padding-left: 5px;
`;
